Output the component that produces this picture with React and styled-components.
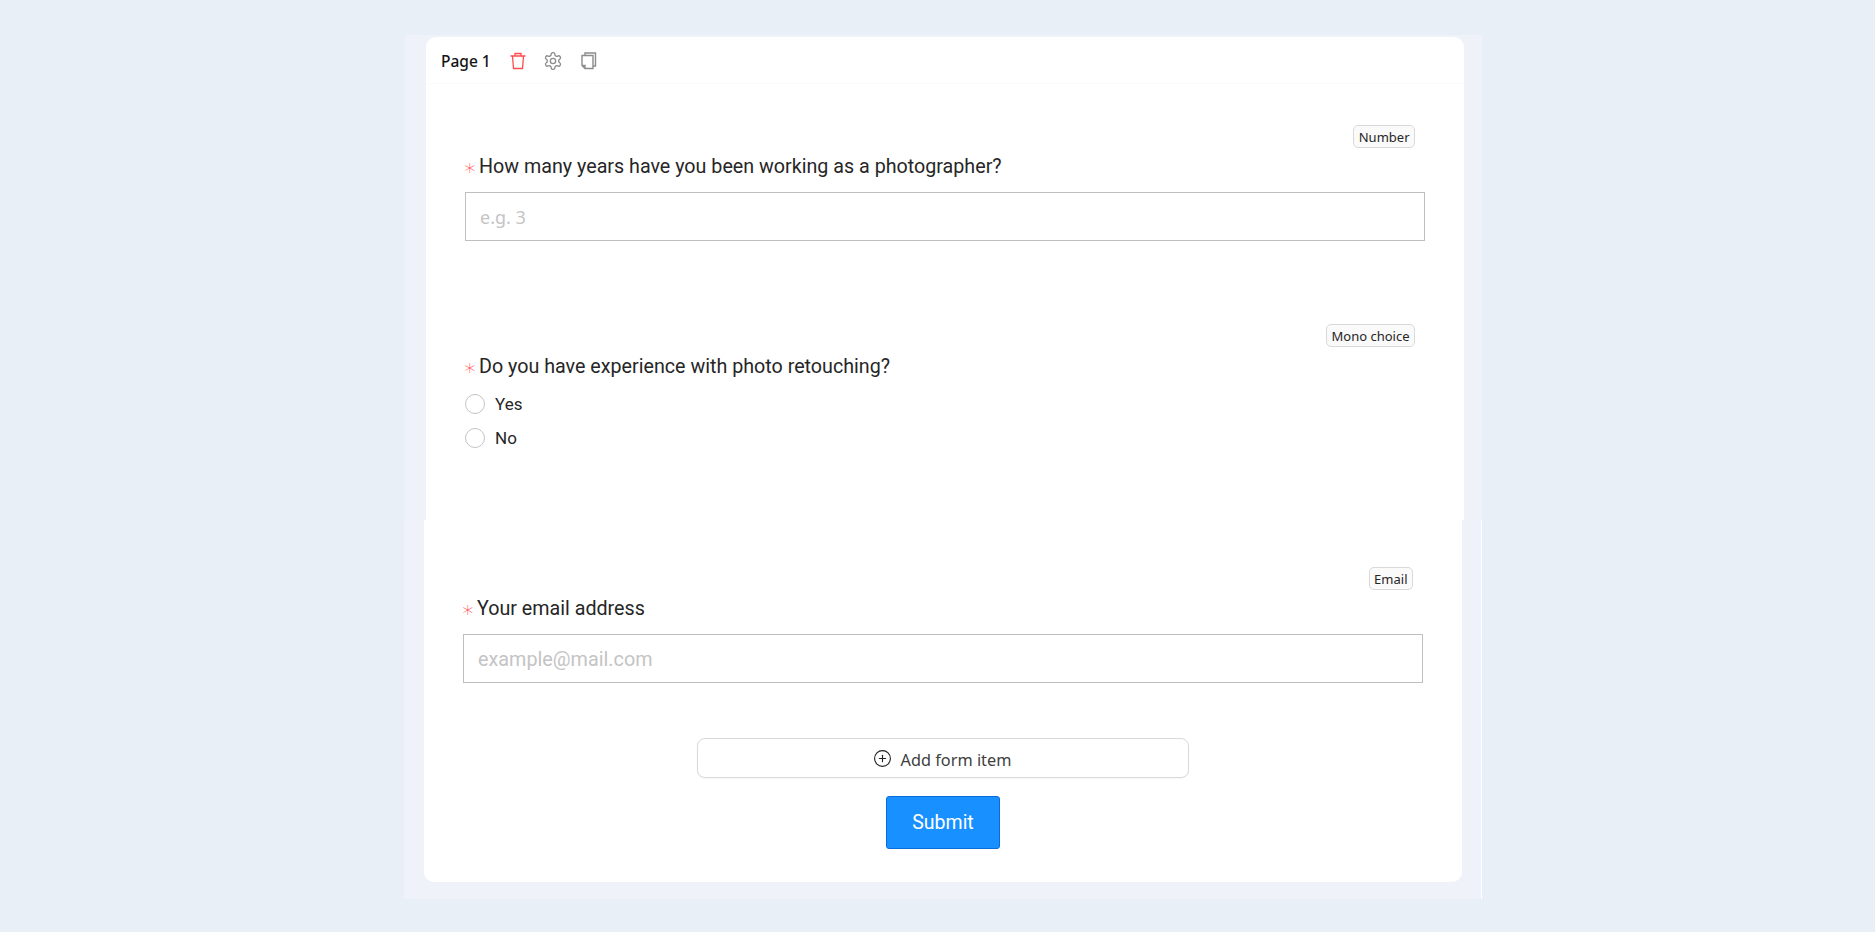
import styled, { createGlobalStyle } from "styled-components";
import { CirclePlus } from "lucide-react";

const GlobalStyle = createGlobalStyle`
  html, body {
    margin: 0;
    padding: 0;
    background: #e8eff6;
    font-family: Roboto, sans-serif;
    color: #1f1f1f;
  }
  * { box-sizing: border-box; }
`;

const Page = styled.div`
  width: 1875px;
  height: 932px;
  padding: 35px 0 0 404px;
  overflow: hidden;
`;

const Panel = styled.section`
  width: ${(p) => (p.$top ? 1077 : 1078)}px;
  display: flex;
  background: #eff3f9;
  margin-left: ${(p) => p.$offset || 0}px;
  padding: ${(p) => (p.$top ? "2px 18px 0 21px" : "0 19px 17px 20px")};
  border-right: ${(p) => (p.$top ? "none" : "1px solid #fff")};
`;

const Card = styled.div`
  width: 1038px;
  background: #fff;
  border-radius: ${(p) => (p.$top ? "10px 10px 0 0" : "0 0 10px 10px")};
  height: ${(p) => p.$height}px;
`;

const PageHeader = styled.header`
  height: 47px;
  display: flex;
  align-items: center;
  padding: 2px 15px 0;
  border-bottom: 1px solid #fbfbfb;
`;

const PageTitle = styled.span`
  font-family: "Noto Sans", sans-serif;
  font-size: 15.5px;
  font-weight: 500;
  color: #141414;
  margin-right: 18px;
`;

const IconButton = styled.span`
  display: flex;
  align-items: center;
  justify-content: center;
  width: 18px;
  height: 18px;
  margin-right: 17.5px;
`;

const FormItem = styled.div`
  padding: ${(p) => p.$pad};
`;

const TagRow = styled.div`
  display: flex;
  justify-content: flex-end;
  padding-right: 49px;
`;

const Tag = styled.span`
  height: 23px;
  padding: 0 4.5px;
  border: 1px solid #d9d9d9;
  border-radius: 5px;
  background: #fafafa;
  font-family: "Noto Sans", sans-serif;
  font-size: 13px;
  line-height: 22px;
  color: #262626;
`;

const Label = styled.label`
  display: flex;
  align-items: center;
  height: 30px;
  margin: ${(p) => p.$margin || "3px 0 11px"};
  font-size: 19.7px;
  color: #262626;
`;

const Star = styled.span`
  width: 14px;
  margin-left: -2px;
  margin-right: 2px;
  padding-top: 4px;
  line-height: 20px;
  font-family: "DejaVu Sans", sans-serif;
  font-size: 22px;
  font-weight: 200;
  color: #ff4d4f;
  white-space: nowrap;
`;

const TextInput = styled.input`
  display: block;
  width: 960px;
  height: 49px;
  padding: 1px 14px 0;
  border: 1px solid #bfbfbf;
  border-radius: 0;
  outline: none;
  font-family: ${(p) => p.$font};
  font-size: ${(p) => p.$size}px;

  &::placeholder {
    color: #c4c4c4;
    opacity: 1;
  }
`;

const RadioRow = styled.label`
  display: flex;
  align-items: center;
  height: 34px;
  gap: 10px;
  font-size: 17px;
  color: #262626;
`;

const RadioDot = styled.span`
  width: 20px;
  height: 20px;
  border: 1px solid #c4c4c4;
  border-radius: 50%;
  background: #fff;
`;

const Actions = styled.div`
  display: flex;
  flex-direction: column;
  align-items: center;
  gap: 18px;
  margin-top: 55px;
`;

const AddButton = styled.button`
  width: 492px;
  height: 40px;
  display: flex;
  align-items: center;
  justify-content: center;
  gap: 9px;
  background: #fff;
  border: 1px solid #d9d9d9;
  border-radius: 8px;
  box-shadow: 0 1px 2px rgba(0, 0, 0, 0.04);
  font-family: "Noto Sans", sans-serif;
  font-size: 16.3px;
  color: #404040;
`;

const AddText = styled.span`
  padding-top: 3px;
  margin-right: 2px;
`;

const SubmitButton = styled.button`
  width: 114px;
  height: 53px;
  background: #1890ff;
  border: 1px solid #096dd9;
  border-radius: 3px;
  font-family: Roboto, sans-serif;
  font-size: 19.5px;
  font-weight: 400;
  color: #fff;
`;

const TrashIcon = () => (
  <svg width="18" height="18" viewBox="0 0 18 18" fill="none" stroke="#ff4d4f" strokeWidth="1.3">
    <path d="M1.5 4h15M6 4V1.5h6V4M3.5 4l1 12.5h9l1-12.5" />
  </svg>
);

const GearIcon = () => (
  <svg width="20" height="20" viewBox="0 0 24 24" style={{ flex: "none" }} fill="none" stroke="#8c8c8c" strokeWidth="1.6" strokeLinejoin="round">
    <path d="M12.22 2h-.44a2 2 0 0 0-2 2v.18a2 2 0 0 1-1 1.73l-.43.25a2 2 0 0 1-2 0l-.15-.08a2 2 0 0 0-2.73.73l-.22.38a2 2 0 0 0 .73 2.73l.15.1a2 2 0 0 1 1 1.72v.51a2 2 0 0 1-1 1.74l-.15.09a2 2 0 0 0-.73 2.73l.22.38a2 2 0 0 0 2.73.73l.15-.08a2 2 0 0 1 2 0l.43.25a2 2 0 0 1 1 1.73V20a2 2 0 0 0 2 2h.44a2 2 0 0 0 2-2v-.18a2 2 0 0 1 1-1.73l.43-.25a2 2 0 0 1 2 0l.15.08a2 2 0 0 0 2.73-.73l.22-.39a2 2 0 0 0-.73-2.73l-.15-.08a2 2 0 0 1-1-1.74v-.5a2 2 0 0 1 1-1.74l.15-.09a2 2 0 0 0 .73-2.73l-.22-.38a2 2 0 0 0-2.73-.73l-.15.08a2 2 0 0 1-2 0l-.43-.25a2 2 0 0 1-1-1.73V4a2 2 0 0 0-2-2z" />
    <circle cx="12" cy="12" r="3.2" />
  </svg>
);

const CopyIcon = () => (
  <svg width="18" height="18" viewBox="0 0 18 18" fill="none" stroke="#8c8c8c" strokeWidth="1.4">
    <path d="M5 3.5V1h10.5v13H13" />
    <path d="M2 3.5h11v13H5l-3-3zM2 13.5h3v3" />
  </svg>
);

export default function App() {
  return (
    <Page>
      <GlobalStyle />
      <Panel $top $offset={1}>
        <Card $top $height={483}>
          <PageHeader>
            <PageTitle>Page 1</PageTitle>
            <IconButton><TrashIcon /></IconButton>
            <IconButton><GearIcon /></IconButton>
            <IconButton><CopyIcon /></IconButton>
          </PageHeader>
          <FormItem $pad="41px 0 0 39px">
            <TagRow><Tag>Number</Tag></TagRow>
            <Label><Star>∗</Star>How many years have you been working as a photographer?</Label>
            <TextInput $font='"Noto Sans", sans-serif' $size={18} placeholder="e.g. 3" />
          </FormItem>
          <FormItem $pad="83px 0 0 39px">
            <TagRow><Tag>Mono choice</Tag></TagRow>
            <Label $margin="4px 0 6px"><Star>∗</Star>Do you have experience with photo retouching?</Label>
            <RadioRow><RadioDot />Yes</RadioRow>
            <RadioRow><RadioDot />No</RadioRow>
          </FormItem>
        </Card>
      </Panel>
      <Panel>
        <Card $height={362}>
          <FormItem $pad="47px 0 0 39px">
            <TagRow><Tag>Email</Tag></TagRow>
            <Label><Star>∗</Star>Your email address</Label>
            <TextInput $font="Roboto, sans-serif" $size={19.8} placeholder="example@mail.com" />
          </FormItem>
          <Actions>
            <AddButton><CirclePlus size={19} strokeWidth={1.4} color="#222" /><AddText>Add form item</AddText></AddButton>
            <SubmitButton>Submit</SubmitButton>
          </Actions>
        </Card>
      </Panel>
    </Page>
  );
}
